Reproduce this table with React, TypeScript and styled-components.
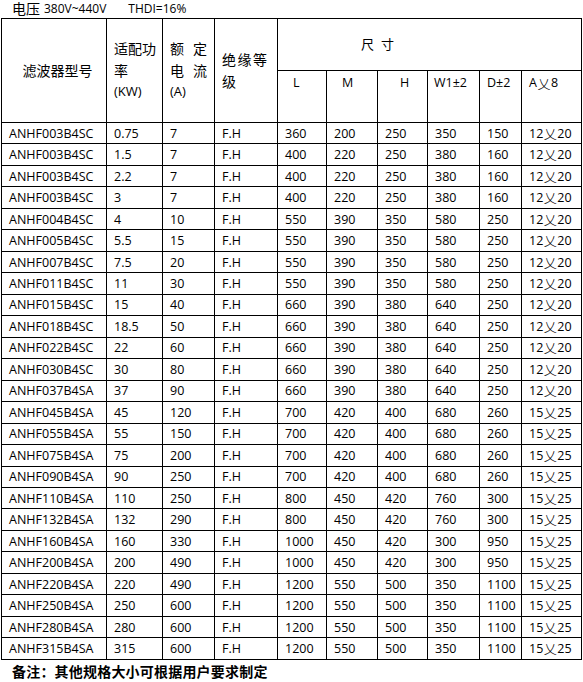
import React from 'react';
import styled, { createGlobalStyle } from 'styled-components';

const GlobalStyle = createGlobalStyle`
  html, body {
    margin: 0;
    padding: 0;
    background: #fff;
  }
  body {
    font-family: "Open Sans", "Noto Sans CJK SC", sans-serif;
    color: #000;
  }
`;

const Page = styled.div`
  display: flex;
  flex-direction: column;
  width: 583px;
`;

const TopLine = styled.div`
  height: 18px;
  display: flex;
  align-items: flex-end;
  padding-left: 12px;
  padding-bottom: 2px;
  box-sizing: border-box;
`;

const CnLabel = styled.span`
  font-family: "Noto Sans CJK SC", sans-serif;
  font-size: 14px;
  line-height: 15px;
  margin-right: 4px;
`;

const LatinLabel = styled.span<{ $gap?: number }>`
  font-size: 12px;
  line-height: 15px;
  margin-left: ${(p) => p.$gap ?? 0}px;
`;

const Sheet = styled.div`
  display: grid;
  grid-template-columns: 105px 56px 52px 63px 49px 51px 50px 52px 42px 60px;
  grid-template-rows: 52px 52px repeat(25, 21.48px);
  width: max-content;
  margin-left: 1px;
  border-top: 1px solid #000;
  border-left: 1px solid #000;
`;

const Cell = styled.div`
  box-sizing: border-box;
  border-right: 1px solid #000;
  border-bottom: 1px solid #000;
  display: flex;
  align-items: center;
  padding-left: 7px;
  font-size: 12.5px;
  white-space: nowrap;
  overflow: hidden;
`;

const HeadCell = styled(Cell)<{ $rows?: number; $cols?: number; $center?: boolean }>`
  grid-row: span ${(p) => p.$rows ?? 1};
  grid-column: span ${(p) => p.$cols ?? 1};
  justify-content: ${(p) => (p.$center ? 'center' : 'flex-start')};
  font-family: "Noto Sans CJK SC", sans-serif;
  font-size: 14px;
  line-height: 21.5px;
  white-space: normal;
`;

const SizeTitle = styled(HeadCell)`
  padding-left: 83px;
  padding-bottom: 2px;
  font-size: 13px;
  letter-spacing: 7px;
`;

const SubHead = styled(Cell)<{ $pad: number }>`
  align-items: flex-start;
  padding-top: 3px;
  padding-left: ${(p) => p.$pad}px;
  font-size: 12.5px;
`;

const Stack = styled.div`
  display: flex;
  flex-direction: column;
`;

const Spread = styled.div`
  display: flex;
  justify-content: space-between;
  width: 37px;
`;

const Spaced = styled.span`
  letter-spacing: 1.5px;
`;

const Latin = styled.span`
  font-family: "Open Sans", sans-serif;
  font-size: 13px;
`;

const Cross = styled.span`
  font-family: "Noto Sans CJK SC", sans-serif;
  font-size: 13px;
  font-weight: 300;
  margin: 0 0.5px;
`;

const Note = styled.div`
  padding-left: 12px;
  padding-top: 2px;
  font-family: "Noto Sans CJK SC", sans-serif;
  font-weight: bold;
  font-size: 14px;
  line-height: 19px;
  letter-spacing: 0.2px;
`;

type Row = [string, string, string, string, string, string, string, string, string, string];

const rows: Row[] = [
  ['ANHF003B4SC', '0.75', '7', 'F.H', '360', '200', '250', '350', '150', '12x20'],
  ['ANHF003B4SC', '1.5', '7', 'F.H', '400', '220', '250', '380', '160', '12x20'],
  ['ANHF003B4SC', '2.2', '7', 'F.H', '400', '220', '250', '380', '160', '12x20'],
  ['ANHF003B4SC', '3', '7', 'F.H', '400', '220', '250', '380', '160', '12x20'],
  ['ANHF004B4SC', '4', '10', 'F.H', '550', '390', '350', '580', '250', '12x20'],
  ['ANHF005B4SC', '5.5', '15', 'F.H', '550', '390', '350', '580', '250', '12x20'],
  ['ANHF007B4SC', '7.5', '20', 'F.H', '550', '390', '350', '580', '250', '12x20'],
  ['ANHF011B4SC', '11', '30', 'F.H', '550', '390', '350', '580', '250', '12x20'],
  ['ANHF015B4SC', '15', '40', 'F.H', '660', '390', '380', '640', '250', '12x20'],
  ['ANHF018B4SC', '18.5', '50', 'F.H', '660', '390', '380', '640', '250', '12x20'],
  ['ANHF022B4SC', '22', '60', 'F.H', '660', '390', '380', '640', '250', '12x20'],
  ['ANHF030B4SC', '30', '80', 'F.H', '660', '390', '380', '640', '250', '12x20'],
  ['ANHF037B4SA', '37', '90', 'F.H', '660', '390', '380', '640', '250', '12x20'],
  ['ANHF045B4SA', '45', '120', 'F.H', '700', '420', '400', '680', '260', '15x25'],
  ['ANHF055B4SA', '55', '150', 'F.H', '700', '420', '400', '680', '260', '15x25'],
  ['ANHF075B4SA', '75', '200', 'F.H', '700', '420', '400', '680', '260', '15x25'],
  ['ANHF090B4SA', '90', '250', 'F.H', '700', '420', '400', '680', '260', '15x25'],
  ['ANHF110B4SA', '110', '250', 'F.H', '800', '450', '420', '760', '300', '15x25'],
  ['ANHF132B4SA', '132', '290', 'F.H', '800', '450', '420', '760', '300', '15x25'],
  ['ANHF160B4SA', '160', '330', 'F.H', '1000', '450', '420', '300', '950', '15x25'],
  ['ANHF200B4SA', '200', '490', 'F.H', '1000', '450', '420', '300', '950', '15x25'],
  ['ANHF220B4SA', '220', '490', 'F.H', '1200', '550', '500', '350', '1100', '15x25'],
  ['ANHF250B4SA', '250', '600', 'F.H', '1200', '550', '500', '350', '1100', '15x25'],
  ['ANHF280B4SA', '280', '600', 'F.H', '1200', '550', '500', '350', '1100', '15x25'],
  ['ANHF315B4SA', '315', '600', 'F.H', '1200', '550', '500', '350', '1100', '15x25'],
];

// "12x20" -> 12乂20, the cross drawn from the CJK font like the original sheet
function Hole({ value }: { value: string }) {
  const [a, b] = value.split('x');
  return (
    <>
      {a}
      <Cross>乂</Cross>
      {b}
    </>
  );
}

const subHeads: [React.ReactNode, number][] = [
  ['L', 15],
  ['M', 15],
  ['H', 22],
  ['W1±2', 6],
  ['D±2', 7],
  [<>A<Cross>乂</Cross>8</>, 7],
];

export default function App() {
  return (
    <Page>
      <GlobalStyle />
      <TopLine>
        <CnLabel>电压</CnLabel>
        <LatinLabel>380V~440V</LatinLabel>
        <LatinLabel $gap={22}>THDI=16%</LatinLabel>
      </TopLine>

      <Sheet>
        <HeadCell $rows={2} $center>
          滤波器型号
        </HeadCell>
        <HeadCell $rows={2}>
          <Stack>
            <span>适配功</span>
            <span>率</span>
            <Latin>(KW)</Latin>
          </Stack>
        </HeadCell>
        <HeadCell $rows={2}>
          <Stack>
            <Spread>
              <span>额</span>
              <span>定</span>
            </Spread>
            <Spread>
              <span>电</span>
              <span>流</span>
            </Spread>
            <Latin>(A)</Latin>
          </Stack>
        </HeadCell>
        <HeadCell $rows={2}>
          <Stack>
            <Spaced>绝缘等</Spaced>
            <span>级</span>
          </Stack>
        </HeadCell>
        <SizeTitle $cols={6}>尺寸</SizeTitle>

        {subHeads.map(([label, pad], i) => (
          <SubHead key={i} $pad={pad}>
            {label}
          </SubHead>
        ))}

        {rows.map((row, r) =>
          row.map((value, c) => (
            <Cell key={`${r}-${c}`}>{c === 9 ? <Hole value={value} /> : value}</Cell>
          )),
        )}
      </Sheet>

      <Note>备注：其他规格大小可根据用户要求制定</Note>
    </Page>
  );
}
